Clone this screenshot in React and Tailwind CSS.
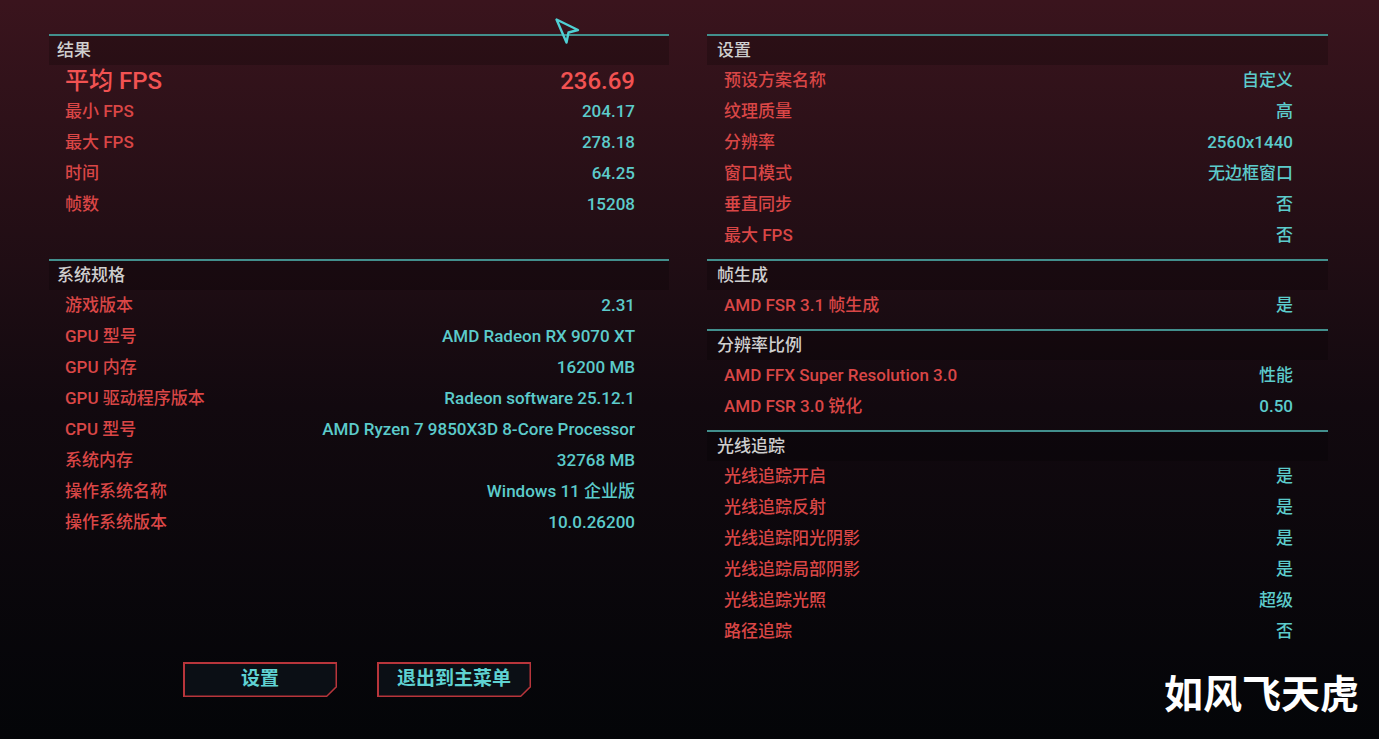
import React from "react";

const FONT = { fontFamily: "Roboto, 'Noto Sans CJK SC', sans-serif" };

function Header({ children, pad = "pl-[8px]" }) {
  return (
    <div className={`flex h-[29px] items-center bg-black/20 text-[17px] font-medium text-[#cfcfcf] ${pad}`}>
      {children}
    </div>
  );
}

function Row({ label, value, pl = "pl-[16px]", pr = "pr-[34px]" }) {
  return (
    <div className={`flex h-[31px] items-center justify-between text-[17px] font-medium ${pl} ${pr}`}>
      <span className="text-[#d94646]">{label}</span>
      <span className="text-[#5ccbcb]">{value}</span>
    </div>
  );
}

function Section({ title, rows }) {
  return (
    <div className="border-t-2 border-[#428f8d]">
      <Header pad="pl-[10px]">{title}</Header>
      {rows.map(([l, v]) => (
        <Row key={l} label={l} value={v} pl="pl-[17px]" pr="pr-[35px]" />
      ))}
    </div>
  );
}

function CutButton({ children }) {
  return (
    <div className="h-[35px] w-[154px] bg-[#b8353b] p-[1.5px] [clip-path:polygon(0_0,100%_0,100%_72%,calc(100%_-_10px)_100%,0_100%)]">
      <div className="flex h-full w-full items-center justify-center bg-[#0b0f15] text-[19px] font-bold text-[#5fd2d2] [clip-path:polygon(0_0,100%_0,100%_72%,calc(100%_-_9px)_100%,0_100%)]">
        {children}
      </div>
    </div>
  );
}

const settings = [
  ["预设方案名称", "自定义"],
  ["纹理质量", "高"],
  ["分辨率", "2560x1440"],
  ["窗口模式", "无边框窗口"],
  ["垂直同步", "否"],
  ["最大 FPS", "否"],
];

const spec = [
  ["游戏版本", "2.31"],
  ["GPU 型号", "AMD Radeon RX 9070 XT"],
  ["GPU 内存", "16200 MB"],
  ["GPU 驱动程序版本", "Radeon software 25.12.1"],
  ["CPU 型号", "AMD Ryzen 7 9850X3D 8-Core Processor"],
  ["系统内存", "32768 MB"],
  ["操作系统名称", "Windows 11 企业版"],
  ["操作系统版本", "10.0.26200"],
];

const rayTracing = [
  ["光线追踪开启", "是"],
  ["光线追踪反射", "是"],
  ["光线追踪阳光阴影", "是"],
  ["光线追踪局部阴影", "是"],
  ["光线追踪光照", "超级"],
  ["路径追踪", "否"],
];

export default function App() {
  return (
    <div
      style={FONT}
      className="relative h-[739px] w-full overflow-hidden bg-gradient-to-b from-[#3a141d] via-[#12090f] via-55% to-[#040508]"
    >
      <div className="flex gap-[38px] pl-[49px] pt-[34px]">
        {/* left column */}
        <div className="w-[620px]">
          <div className="border-t-2 border-[#428f8d]">
            <Header>结果</Header>
            <div className="flex h-[31px] items-center justify-between pl-[16px] pr-[34px] text-[24px] font-medium text-[#f25252]">
              <span>平均 FPS</span>
              <span>236.69</span>
            </div>
            <Row label="最小 FPS" value="204.17" />
            <Row label="最大 FPS" value="278.18" />
            <Row label="时间" value="64.25" />
            <Row label="帧数" value="15208" />
          </div>

          <div className="mt-[39px] border-t-2 border-[#428f8d]">
            <Header>系统规格</Header>
            {spec.map(([l, v]) => (
              <Row key={l} label={l} value={v} />
            ))}
          </div>

          <div className="ml-[134px] mt-[124px] flex gap-[40px]">
            <CutButton>设置</CutButton>
            <CutButton>退出到主菜单</CutButton>
          </div>
        </div>

        {/* right column */}
        <div className="flex w-[621px] flex-col gap-[8px]">
          <Section title="设置" rows={settings} />
          <Section title="帧生成" rows={[["AMD FSR 3.1 帧生成", "是"]]} />
          <Section
            title="分辨率比例"
            rows={[
              ["AMD FFX Super Resolution 3.0", "性能"],
              ["AMD FSR 3.0 锐化", "0.50"],
            ]}
          />
          <Section title="光线追踪" rows={rayTracing} />
        </div>
      </div>

      {/* cursor */}
      <svg className="absolute left-[553px] top-[16px]" width="30" height="32" viewBox="0 0 30 32">
        <path
          d="M3.5 3.5 L25 14 L15.5 16.5 L13.5 26.5 Z"
          fill="none"
          stroke="#4fd0d4"
          strokeWidth="2.4"
          strokeLinejoin="round"
        />
      </svg>

      {/* watermark */}
      <div className="absolute left-[1164px] top-[672px] text-[39px] font-bold leading-none text-white [font-family:'Noto_Sans_CJK_SC',sans-serif]">
        如风飞天虎
      </div>
    </div>
  );
}
